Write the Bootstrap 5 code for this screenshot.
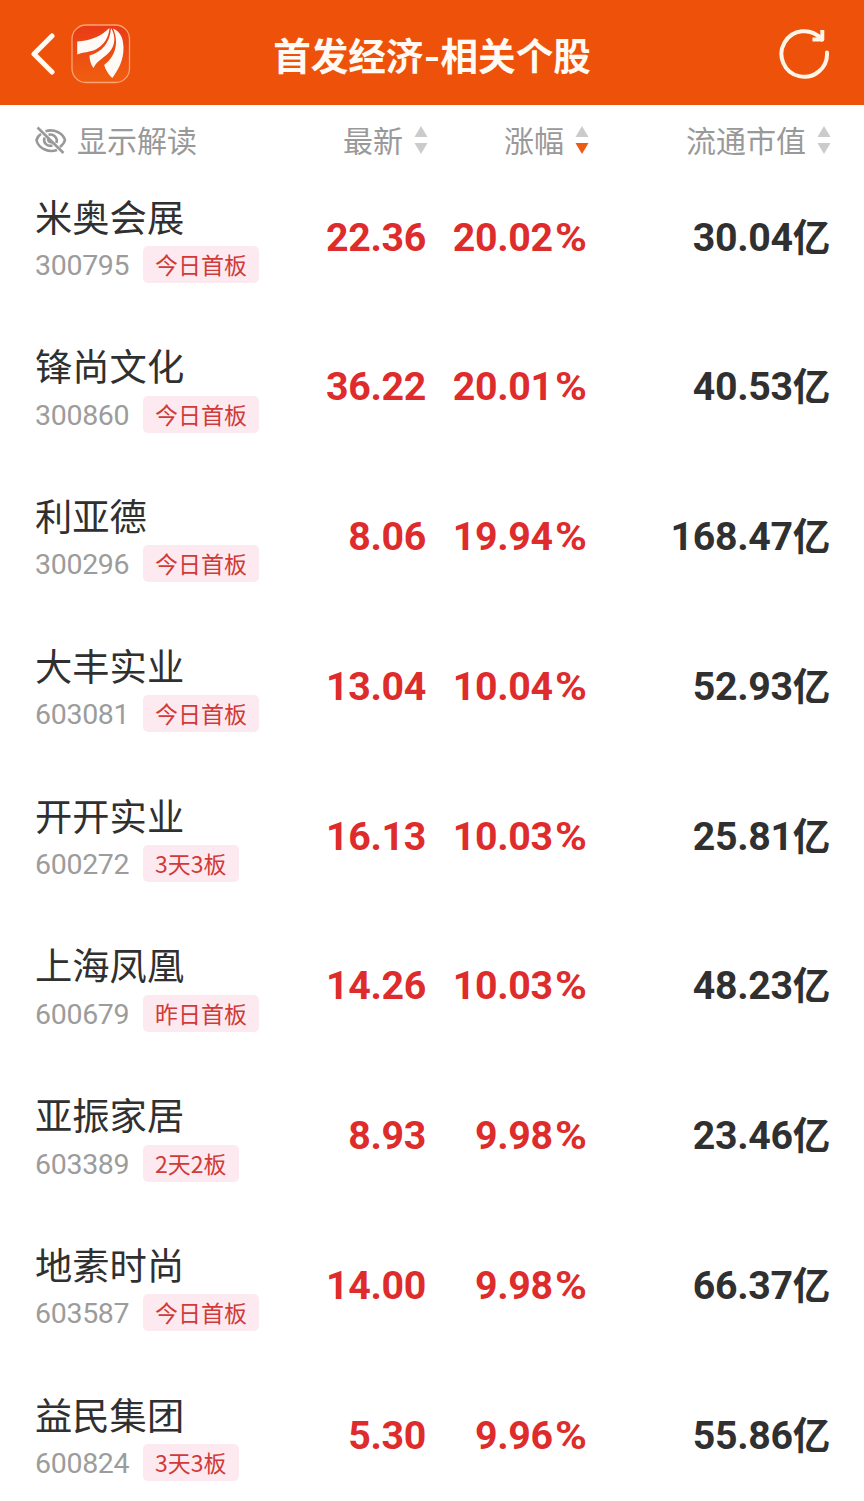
<!DOCTYPE html>
<html lang="zh-CN">
<head>
<meta charset="utf-8">
<meta name="viewport" content="width=device-width, initial-scale=1">
<title>首发经济-相关个股</title>
<link href="https://cdn.jsdelivr.net/npm/bootstrap@5.3.0/dist/css/bootstrap.min.css" rel="stylesheet">
<style>
body{height:1501px;overflow:hidden;background:#fff;color:#303030;font-family:"Noto Sans CJK SC",sans-serif}
.topbar{height:105px;background:#ee520a;padding:3px 34px 0 31px}
.topbar h1{font-size:37.6px;line-height:54px;color:#fffaf4;padding:0 0 1px 3px}
.dash{display:inline-block;transform:scaleX(1.15);margin:0 1.6px}
.side{width:100px}
.stock-grid{display:grid;grid-template-columns:250px 141px 161px 243px;padding-left:35px}
.heads{height:75px;padding-bottom:6px;font-size:30px;line-height:44px;color:#999}
.heads .sort{margin-right:-1.5px;gap:10.500px}
.heads .sort:last-child{margin-right:-.5px}
.heads span{margin-top:-1px}
.eye-label{margin-left:10px}
.stock{height:149.8px;padding-top:11.500px}
.stock-name{font-size:37.3px;line-height:48px}
.meta{margin-top:6.300px}
.code{font:400 28.5px/37px Roboto,sans-serif;color:#9c9c9c;width:108px;letter-spacing:-.3px;padding-top:1px}
.tag{height:37px;line-height:36.500px;font-size:23px;padding:0 12px;background:#fdeaf0;color:#d13a38;border-radius:5px}
.num{font:700 39.3px/46px Roboto,"Noto Sans CJK SC",sans-serif;letter-spacing:-.3px;padding-top:23px;text-align:right;white-space:nowrap}
.up{color:#de2b2b}
.pct{display:inline-block;transform:scaleX(1.1);transform-origin:right;margin-left:5.500px}
.yi{font-family:"Noto Sans CJK SC",sans-serif;font-size:37.5px;line-height:40px}
</style>
</head>
<body>
<header class="topbar d-flex align-items-center justify-content-between">
  <div class="side d-flex align-items-center">
    <svg width="24" height="42" viewBox="0 0 24 42" fill="none" stroke="#fffaf4" stroke-width="5" stroke-linecap="round" stroke-linejoin="round"><path d="M21 3 3 21l18 18"/></svg>
    <svg class="ms-3 flex-shrink-0" width="60" height="60" viewBox="0 0 60 60">
      <defs><linearGradient id="lg" x1="0" y1="0" x2="0" y2="1"><stop stop-color="#e93a16"/><stop offset=".9" stop-color="#ef5c10"/></linearGradient></defs>
      <rect x="1" y="1" width="57.500" height="57.500" rx="14" fill="url(#lg)" stroke="#fba374" stroke-width="1.3"/>
      <g fill="#fffaf6"><path d="M6.200 17.500C20 17 30 12 38.500 4C38 13 33 21 25.500 25C19 28.500 12 28 6.200 30.500Z"/><path d="M40 4C44 10 45 19 40 26C35 33 26 36 22.500 44C20 41 18.500 36 18.500 31.500C31 28 39 19 40 4Z"/><path d="M42 4.500C49 7 52.500 14 52.500 24C52.500 37 47 46 41.300 54C38 51 34.500 46 33.200 41C43 34 49 20 42 4.500Z"/></g>
    </svg>
  </div>
  <h1 class="m-0 fw-bold">首发经济<span class="dash">-</span>相关个股</h1>
  <div class="side d-flex justify-content-end">
    <svg width="52" height="52" viewBox="0 0 52 52" fill="none" stroke="#fff5e8" stroke-width="4" stroke-linecap="round"><path d="M49 24.500A22.800 22.800 0 1 1 43 10.500"/><path d="M44.300 2v9.500H34.500" stroke-linecap="butt" stroke-linejoin="round"/><path d="M40 8l4 3.500" /></svg>
  </div>
</header>
<main>
  <div class="stock-grid heads">
    <div class="d-flex align-items-center">
      <svg width="32" height="30" viewBox="0 0 32 30" fill="none" stroke="#999" stroke-width="2.600"><path d="M2.500 2.500 28.500 28M10.500 6.300C19 3.500 28 8 30 15Q29 19 25 22M6 9Q2 11.500 1.500 15.500C4 24 14 28 22 25M13.500 9.800C19 8.500 23 13 21.500 18M9.500 12.500C8 18 12 22 17.500 20.500M13.200 13.500Q13 17 17 17.500"/></svg>
      <span class="eye-label">显示解读</span>
    </div>
    <div class="sort d-flex align-items-center justify-content-end"><span>最新</span><svg width="14" height="28" viewBox="0 0 14 28"><path d="M7 0l6.500 11H.5Z" fill="#cbcbcb"/><path d="M7 28l6.500-11H.5Z" fill="#cbcbcb"/></svg></div>
    <div class="sort d-flex align-items-center justify-content-end"><span>涨幅</span><svg width="14" height="28" viewBox="0 0 14 28"><path d="M7 0l6.500 11H.5Z" fill="#cbcbcb"/><path d="M7 28l6.500-11H.5Z" fill="#ec5a14"/></svg></div>
    <div class="sort d-flex align-items-center justify-content-end"><span>流通市值</span><svg width="14" height="28" viewBox="0 0 14 28"><path d="M7 0l6.500 11H.5Z" fill="#cbcbcb"/><path d="M7 28l6.500-11H.5Z" fill="#cbcbcb"/></svg></div>
  </div>
  <div id="stocks"></div>
</main>
<script src="https://cdn.jsdelivr.net/npm/bootstrap@5.3.0/dist/js/bootstrap.bundle.min.js"></script>
<script>
const stocks = [
  ["米奥会展","300795","今日首板","22.36","20.02","30.04"],
  ["锋尚文化","300860","今日首板","36.22","20.01","40.53"],
  ["利亚德","300296","今日首板","8.06","19.94","168.47"],
  ["大丰实业","603081","今日首板","13.04","10.04","52.93"],
  ["开开实业","600272","3天3板","16.13","10.03","25.81"],
  ["上海凤凰","600679","昨日首板","14.26","10.03","48.23"],
  ["亚振家居","603389","2天2板","8.93","9.98","23.46"],
  ["地素时尚","603587","今日首板","14.00","9.98","66.37"],
  ["益民集团","600824","3天3板","5.30","9.96","55.86"]
];
document.getElementById("stocks").innerHTML = stocks.map(([name, code, tag, price, rise, cap]) => `
  <div class="stock-grid stock">
    <div>
      <div class="stock-name">${name}</div>
      <div class="meta d-flex"><span class="code">${code}</span><span class="tag">${tag}</span></div>
    </div>
    <div class="num up">${price}</div>
    <div class="num up">${rise}<span class="pct">%</span></div>
    <div class="num">${cap}<span class="yi">亿</span></div>
  </div>`).join("");
</script>
</body>
</html>
